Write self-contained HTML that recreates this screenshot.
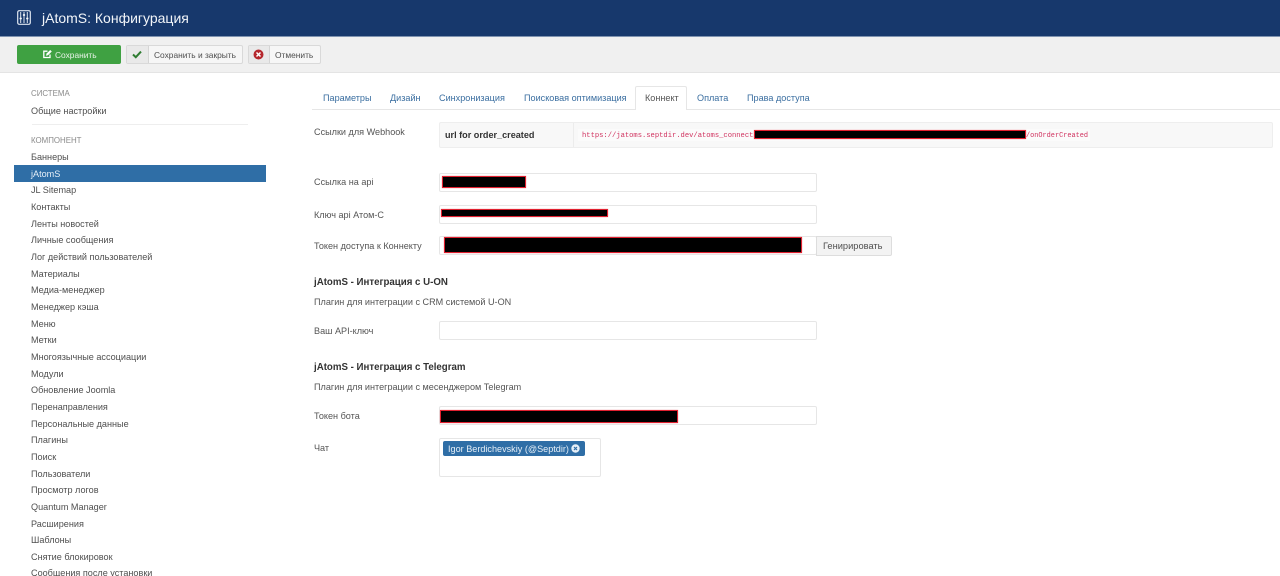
<!DOCTYPE html>
<html lang="ru"><head><meta charset="utf-8"><title>jAtomS: Конфигурация</title>
<style>
html,body{margin:0;padding:0;background:#fff}
#p{position:relative;width:1280px;height:576px;overflow:hidden;background:#fff;font-family:"Liberation Sans",sans-serif;font-size:9.1px;color:#4f4f4f;filter:blur(.35px)}
#p div,#p svg{position:absolute}
.t{white-space:nowrap;line-height:12px;height:12px}
.l{color:#4f4f4f;left:31px}
.h{color:#8a8a8a;font-size:7.9px;left:31px}
.tab{color:#3a6ea0;top:92px}
.lab{left:314px;color:#555}
.inp{left:439px;width:377.5px;background:#fff;border:1px solid #e6e6e6;border-radius:2px;box-sizing:border-box;height:19px}
.red{background:#000;border:1.5px solid #e0202f;box-sizing:border-box;box-shadow:0 0 1px #e8808a}
.b{font-weight:bold;color:#333}
.btn{background:#f6f6f6;border:1px solid #d9d9d9;border-radius:2px;box-sizing:border-box;height:19px;top:45px}
.ic{background:#e9e9e9;border-right:1px solid #d5d5d5;top:0;left:0;height:17px}
</style></head><body><div id="p">
<div style="left:0;top:0;width:1280px;height:36px;background:#17386c"></div>
<div style="left:0;top:36px;width:1280px;height:1px;background:#7f93b0"></div>
<div style="left:0;top:37px;width:1280px;height:35px;background:#f0f0f0;border-bottom:1px solid #e4e4e4"></div>
<svg style="left:17px;top:10px" width="14" height="15" viewBox="0 0 14 15"><rect x=".7" y=".7" width="12.6" height="13.6" rx="1.5" fill="none" stroke="#dfe6f0" stroke-width="1.2"/><path d="M3.7 2v11M7 2v11M10.3 2v11" stroke="#dfe6f0" stroke-width="1"/><path d="M2.6 8.5h2.2M5.9 5h2.2M9.2 8.5h2.2" stroke="#fff" stroke-width="1.5"/></svg>
<div class="t" style="left:42px;top:11px;font-size:14px;line-height:15px;height:15px;color:#f2f5f9">jAtomS: Конфигурация</div>

<div style="left:17px;top:45px;width:104px;height:19px;background:#3fa142;border-radius:2px"></div>
<svg style="left:43px;top:49px" width="9" height="10" viewBox="0 0 9 10"><path d="M7 5.5V8.5H.8V2.2H4.5" fill="none" stroke="#fff" stroke-width="1.3"/><path d="M3 6.8L3.5 4.6L7.2 1L8.8 2.5L5 6.2Z" fill="#fff"/></svg>
<div class="t" style="left:55px;top:49px;font-size:8.4px;color:#e8f3e8">Сохранить</div>

<div class="btn" style="left:126px;width:117px"><div class="ic" style="width:21px"></div>
<svg style="left:5px;top:4px" width="10" height="9" viewBox="0 0 10 9"><path d="M1 4.5L3.8 7.2L9 1.6" fill="none" stroke="#2f7d32" stroke-width="2"/></svg>
<div class="t" style="left:27px;top:3px;font-size:8.4px">Сохранить и закрыть</div></div>

<div class="btn" style="left:248px;width:73px"><div class="ic" style="width:20px"></div>
<svg style="left:4px;top:3px" width="11" height="11" viewBox="0 0 11 11"><circle cx="5.5" cy="5.5" r="5" fill="#b5272d"/><path d="M3.5 3.5L7.5 7.5M7.5 3.5L3.5 7.5" stroke="#fff" stroke-width="1.5"/></svg>
<div class="t" style="left:26px;top:3px;font-size:8.4px">Отменить</div></div>

<div class="t h" style="top:88px">СИСТЕМА</div>
<div class="t l" style="top:105px">Общие настройки</div>
<div style="left:32px;top:124px;width:216px;height:1px;background:#eee"></div>
<div class="t h" style="top:135px">КОМПОНЕНТ</div>
<div style="left:14px;top:165px;width:252px;height:17px;background:#2f6ea6"></div>

<div class="t l" style="top:151px">Баннеры</div>
<div class="t l" style="top:168px;color:#e6eff7">jAtomS</div>
<div class="t l" style="top:184px">JL Sitemap</div>
<div class="t l" style="top:201px">Контакты</div>
<div class="t l" style="top:218px">Ленты новостей</div>
<div class="t l" style="top:234px">Личные сообщения</div>
<div class="t l" style="top:251px">Лог действий пользователей</div>
<div class="t l" style="top:268px">Материалы</div>
<div class="t l" style="top:284px">Медиа-менеджер</div>
<div class="t l" style="top:301px">Менеджер кэша</div>
<div class="t l" style="top:318px">Меню</div>
<div class="t l" style="top:334px">Метки</div>
<div class="t l" style="top:351px">Многоязычные ассоциации</div>
<div class="t l" style="top:368px">Модули</div>
<div class="t l" style="top:384px">Обновление Joomla</div>
<div class="t l" style="top:401px">Перенаправления</div>
<div class="t l" style="top:418px">Персональные данные</div>
<div class="t l" style="top:434px">Плагины</div>
<div class="t l" style="top:451px">Поиск</div>
<div class="t l" style="top:468px">Пользователи</div>
<div class="t l" style="top:484px">Просмотр логов</div>
<div class="t l" style="top:501px">Quantum Manager</div>
<div class="t l" style="top:518px">Расширения</div>
<div class="t l" style="top:534px">Шаблоны</div>
<div class="t l" style="top:551px">Снятие блокировок</div>
<div class="t l" style="top:567px">Сообщения после установки</div>

<div style="left:312px;top:109px;width:968px;height:1px;background:#e6e6e6"></div>
<div style="left:635px;top:86px;width:52px;height:24px;box-sizing:border-box;background:#fff;border:1px solid #e6e6e6;border-bottom:0;border-radius:2px 2px 0 0"></div>
<div class="t tab" style="left:323px">Параметры</div>
<div class="t tab" style="left:390px">Дизайн</div>
<div class="t tab" style="left:439px">Синхронизация</div>
<div class="t tab" style="left:524px">Поисковая оптимизация</div>
<div class="t tab" style="left:645px;color:#555">Коннект</div>
<div class="t tab" style="left:697px">Оплата</div>
<div class="t tab" style="left:747px">Права доступа</div>

<div class="t lab" style="top:126px">Ссылки для Webhook</div>
<div style="left:439px;top:122px;width:834px;height:26px;box-sizing:border-box;background:#f8f8f8;border:1px solid #eee;border-radius:2px"></div>
<div style="left:573px;top:123px;width:1px;height:24px;background:#ececec"></div>
<div class="t b" style="left:445px;top:129px;font-size:9.1px">url for order_created</div>
<div style="left:578px;top:129px;width:512px;height:12px;background:#fbfbfb"></div>
<div class="t" style="left:582px;top:130px;font-family:'Liberation Mono',monospace;font-size:7.15px;color:#d0325f">https://jatoms.septdir.dev/atoms_connect/</div>
<div class="red" style="left:754px;top:130px;width:272px;height:9px"></div>
<div class="t" style="left:1026px;top:130px;font-family:'Liberation Mono',monospace;font-size:6.9px;color:#d0325f">/onOrderCreated</div>

<div class="t lab" style="top:176px">Ссылка на api</div>
<div class="inp" style="top:173px"></div>
<div class="red" style="left:442px;top:176px;width:84px;height:12px"></div>
<div class="t lab" style="top:209px">Ключ api Атом-С</div>
<div class="inp" style="top:205px"></div>
<div class="red" style="left:441px;top:209px;width:167px;height:8px"></div>
<div class="t lab" style="top:240px">Токен доступа к Коннекту</div>
<div class="inp" style="top:236px"></div>
<div style="left:816px;top:236px;width:76px;height:20px;box-sizing:border-box;background:#f3f3f3;border:1px solid #ddd;border-radius:0 2px 2px 0"></div>
<div class="t" style="left:823px;top:240px;font-size:9.3px">Генирировать</div>
<div class="red" style="left:444px;top:237px;width:358px;height:16px"></div>

<div class="t b" style="left:314px;top:277px;font-size:9.7px">jAtomS - Интеграция с U-ON</div>
<div class="t lab" style="top:296px">Плагин для интеграции с CRM системой U-ON</div>
<div class="t lab" style="top:325px">Ваш API-ключ</div>
<div class="inp" style="top:321px"></div>
<div class="t b" style="left:314px;top:362px;font-size:9.7px">jAtomS - Интеграция с Telegram</div>
<div class="t lab" style="top:381px">Плагин для интеграции с месенджером Telegram</div>
<div class="t lab" style="top:410px">Токен бота</div>
<div class="inp" style="top:406px"></div>
<div class="red" style="left:440px;top:410px;width:238px;height:13px"></div>
<div class="t lab" style="top:442px">Чат</div>
<div style="left:439px;top:438px;width:162px;height:39px;box-sizing:border-box;background:#fff;border:1px solid #e6e6e6;border-radius:2px"></div>
<div style="left:443px;top:441px;width:142px;height:15px;background:#2f6ea6;border-radius:2px"></div>
<div class="t" style="left:448px;top:443px;color:#e6eff7;font-size:9.1px">Igor Berdichevskiy (@Septdir)</div>
<svg style="left:571px;top:444px" width="9" height="9" viewBox="0 0 9 9"><circle cx="4.5" cy="4.5" r="4.2" fill="#e6eff7"/><path d="M3 3L6 6M6 3L3 6" stroke="#2f6ea6" stroke-width="1.2"/></svg>
</div></body></html>
